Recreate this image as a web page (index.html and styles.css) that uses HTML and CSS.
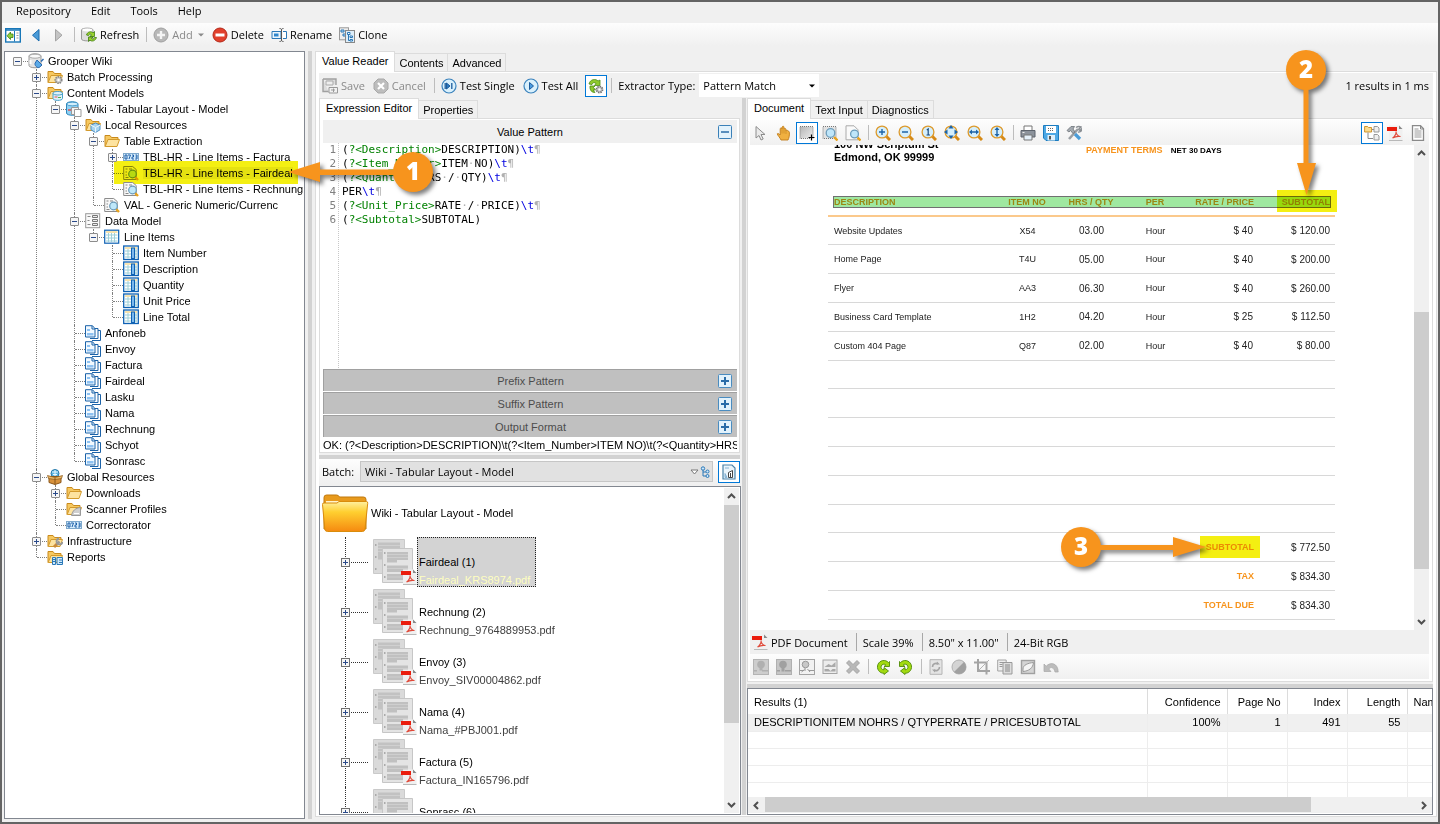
FILE: index.html
```html
<!DOCTYPE html>
<html lang="en">
<head>
    <meta charset="UTF-8">
    <meta name="viewport" content="width=device-width, initial-scale=1.0">
    <title>Grooper Wiki</title>
    <link rel="stylesheet" href="styles.css">
</head>
<body>

<svg class="sprite" width="0" height="0">
    <defs>
        <linearGradient id="gold" x1="0" y1="0" x2="0" y2="1">
            <stop offset="0" stop-color="#fff0a0"/><stop offset=".35" stop-color="#ffcf30"/><stop offset="1" stop-color="#f58a10"/>
        </linearGradient>
        <linearGradient id="steel" x1="0" y1="0" x2="1" y2="1">
            <stop offset="0" stop-color="#b4b4b4"/><stop offset="1" stop-color="#eeeeee"/>
        </linearGradient>
    </defs>
    <symbol id="i-folder" viewBox="0 0 16 16"><path d="M1 13.500V2.500h5l1.500 2H14v2" fill="#f6c860" stroke="#c98a1c"/><path d="M1.200 13.500L4 6.500h11.500L13 13.500z" fill="#fde3a0" stroke="#d39a2c"/></symbol>
    <symbol id="i-folder-gear" viewBox="0 0 16 16"><use href="#i-folder"/><circle cx="11.500" cy="11" r="3.200" fill="#ccc" stroke="#888" stroke-dasharray="1.500 .8" stroke-width="1.800"/><circle cx="11.500" cy="11" r="1.200" fill="#fff"/></symbol>
    <symbol id="i-folder-stack" viewBox="0 0 16 16"><use href="#i-folder"/><path d="M6 8c0-2 9.500-2 9.500 0v5.500c0 2.500-9.500 2.500-9.500 0z" fill="#dff2fb" stroke="#4aa0c8"/><path d="M6 8.500c0 2 9.500 2 9.500 0" fill="none" stroke="#4aa0c8"/><path d="M7.500 12h3" stroke="#e05050"/><path d="M11 12.500h3" stroke="#50b050"/></symbol>
    <symbol id="i-folder-cube" viewBox="0 0 16 16"><use href="#i-folder"/><path d="M10.500 6l4.500 2.200v4.600L10.500 15.500 6 12.800V8.200z" fill="#a8d4f0" stroke="#4a90c8"/><path d="M6 8.200l4.500 2.300L15 8.200M10.500 10.500v5" fill="none" stroke="#e8f5fc"/></symbol>
    <symbol id="i-folder-scan" viewBox="0 0 16 16"><use href="#i-folder"/><path d="M5.500 14.500c1-5 4-7.500 9-8v8z" fill="#cfcfcf" stroke="#999"/><path d="M8 12.500h5" stroke="#fff"/></symbol>
    <symbol id="i-folder-wrench" viewBox="0 0 16 16"><use href="#i-folder"/><path d="M7 14l4-4" stroke="#c98a3c" stroke-width="3"/><path d="M10.500 10.500l2-2" stroke="#999" stroke-width="2.500"/><path d="M12 5.500a3 3 0 1 0 3.500 3.500" fill="none" stroke="#999" stroke-width="1.800"/></symbol>
    <symbol id="i-folder-report" viewBox="0 0 16 16"><use href="#i-folder"/><path d="M5.500 8.500h3v7h-3zM10 8.500h5.500v7H10z" fill="#cfe8fa" stroke="#2a78b8"/><path d="M5.500 10.500h3M5.500 12.500h3M12 11h3M12 13.500h3" stroke="#2a78b8"/></symbol>
    <symbol id="i-db-plug" viewBox="0 0 16 16"><path d="M1 3c0-3 12-3 12 0v9.500c0 3-12 3-12 0z" fill="#e4e4e4" stroke="#9a9a9a"/><ellipse cx="7" cy="3.200" rx="5.800" ry="2" fill="#fafafa" stroke="#aaa"/><path d="M2.500 7v4" stroke="#fff" stroke-width="2"/><path d="M15.500 6l-2.500 2.500" stroke="#2a6ab0" stroke-width="1.500"/><path d="M9 7l5 5-2.500 2.200c-2 1.500-5.500-2-4.300-4.200z" fill="#5aaae8" stroke="#2a6ab0"/></symbol>
    <symbol id="i-model" viewBox="0 0 16 16"><path d="M.5 3C.5 0 12 0 12 3v9c0 3-11.500 3-11.500 0z" fill="#8fd0f2" stroke="#2d87bd"/><ellipse cx="6.300" cy="3" rx="5.500" ry="1.800" fill="#d2effc" stroke="#2d87bd" stroke-width=".7"/><path d="M2 9h3" stroke="#e05050" stroke-width="1.500"/><path d="M5.500 6.500h7v7h-7z" fill="#f4f4f4" stroke="#999"/><path d="M8.500 8.500h6.500v7H8.500z" fill="#fff" stroke="#999"/></symbol>
    <symbol id="i-0723" viewBox="0 0 16 16"><rect x=".5" y="4.500" width="15" height="7" fill="#d6ecfb" stroke="#7fa9cc"/><path d="M2 6h2v4H2zM5 6h2.500L6 10M9 6h1.500v2H9v2h2M12.500 6H14v4h-1.800M12.500 8H14" fill="none" stroke="#1d5fa8"/></symbol>
    <symbol id="i-reader" viewBox="0 0 16 16"><path d="M.7 1.500h9l3.500 3v10H.7z" fill="#f8f8f8" stroke="#8c8c8c"/><path d="M2.500 4h2M2.500 7h1.500M2.500 10h1.500M6 4h3M2.500 12.500h3" stroke="#888"/><path d="M12 12l3 3" stroke="#e8a21c" stroke-width="2.400"/><circle cx="9.500" cy="9" r="3.800" fill="#bfe8fa" stroke="#6a9ab8" stroke-width="1.200"/></symbol>
    <symbol id="i-datamodel" viewBox="0 0 16 16"><rect x=".7" y=".7" width="14" height="14" fill="#fafafa" stroke="#999"/><path d="M2.500 3.500h3M2.500 7.500h2M2.500 11.500h3" stroke="#888"/><path d="M7.500 2.500h5v2h-5zM7.500 6.500h5v2h-5zM7.500 10.500h5v2h-5z" fill="#eee" stroke="#777"/></symbol>
    <symbol id="i-table" viewBox="0 0 16 16"><rect x=".7" y="1.200" width="14" height="13" fill="#fff" stroke="#0f62b4" stroke-width="1.200"/><path d="M2 3h11.500" stroke="#f0c860"/><path d="M2 6h11.500M2 9h11.500M2 12h11.500M4.500 4v9M7.500 4v9M10.500 4v9" stroke="#9ed0d8"/></symbol>
    <symbol id="i-column" viewBox="0 0 16 16"><rect x=".7" y="1" width="14.600" height="13.500" fill="#fff" stroke="#0f62b4" stroke-width="1.300"/><path d="M2 3h12" stroke="#f0c860"/><path d="M2 6h12M2 9h12M2 12h12M5 4v9.500M13 4v9.500" stroke="#9ed0d8"/><rect x="8.500" y="3" width="3" height="10.500" fill="#7db8ec" stroke="#0f62b4"/></symbol>
    <symbol id="i-doctype" viewBox="0 0 16 16"><path d="M8 5.500h7.500v10H7" fill="#fff" stroke="#1b62a8"/><path d="M5 3.500h8v10H5" fill="#fff" stroke="#1b62a8"/><path d="M.5.700h7l2.500 3v8.300H.5z" fill="#f2f9ff" stroke="#1b62a8"/><path d="M7 1v3h3" fill="none" stroke="#1b62a8"/><path d="M2 4h3v2H2zM2 8h6.500v2.500H2z" fill="#8ec2f2"/></symbol>
    <symbol id="i-globalbox" viewBox="0 0 16 16"><circle cx="8" cy="4.500" r="4" fill="#5cb4e0" stroke="#2878a8"/><path d="M5 3h6M6 5.500h4M8 1v6" stroke="#e8f8ff"/><path d="M2 7.500h12v6L8 15.500 2 13.500z" fill="#d8923c" stroke="#8a5618"/><path d="M.5 6.500l7.500 2 7.500-2-1 3-6.500 1-6.500-1z" fill="#eab968" stroke="#8a5618" stroke-width=".7"/><path d="M8 9v6" stroke="#8a5618"/></symbol>

    <symbol id="i-panel" viewBox="0 0 16 16"><rect x=".7" y="1.700" width="14.600" height="13.300" fill="#fff" stroke="#1877b8" stroke-width="1.400"/><path d="M1 3h14" stroke="#1877b8" stroke-width="1.500"/><path d="M9.500 4v10.500" stroke="#1877b8"/><path d="M8 7v3.500H5.500v2L2 8.800 5.500 5v2z" fill="#8ccf3c" stroke="#3f7d10" stroke-width=".8"/><path d="M11.500 6h2M11.500 8.500h2M11.500 11h2" stroke="#999"/></symbol>
    <symbol id="i-back" viewBox="0 0 16 16"><path d="M11 2.500v11.500L4.500 8.200z" fill="#4a9bd8" stroke="#1c6cae"/></symbol>
    <symbol id="i-forward" viewBox="0 0 16 16"><path d="M4.500 2.500v11.500L11 8.200z" fill="#c4c4c4" stroke="#a4a4a4"/></symbol>
    <symbol id="i-refresh" viewBox="0 0 16 16"><path d="M.5 3C.5.500 12 .5 12 3v9c0 2.500-11.500 2.500-11.500 0z" fill="#dedede" stroke="#9a9a9a"/><ellipse cx="6.300" cy="3" rx="5" ry="1.400" fill="#fff"/><path d="M5.500 8c1-3.500 5-4 6.500-2l1.500-1.500v5H8.800L10.500 8C9 6.500 8 7 7.500 8.500z" fill="#9ad22e" stroke="#3f7d10" stroke-width=".8"/><path d="M15.500 10.500c-1 3.500-5 4.500-6.500 2.500L7.500 14.500v-4.500h4.500l-1.500 1.500c1.500 1 2.500.500 3-1z" fill="#9ad22e" stroke="#3f7d10" stroke-width=".8"/></symbol>
    <symbol id="i-add" viewBox="0 0 16 16"><circle cx="8" cy="8" r="7" fill="#b8b8b8" stroke="#a0a0a0"/><path d="M8 4v8M4 8h8" stroke="#f4f4f4" stroke-width="2.400"/></symbol>
    <symbol id="i-delete" viewBox="0 0 16 16"><circle cx="8" cy="8" r="7" fill="#e2402c" stroke="#b42818"/><path d="M3.500 8h9" stroke="#fff" stroke-width="3"/></symbol>
    <symbol id="i-rename" viewBox="0 0 16 16"><path d="M1 4.500h9v7H1z" fill="#eaf5fd" stroke="#2a78b8"/><path d="M3 6.500h4.500v3H3z" fill="#2f86cc"/><path d="M12 4.500h3.500v7H12" fill="#fff" stroke="#2a78b8"/><path d="M8.500 1.500c1 0 2 .3 2 1.200v10.600c0 .9-1 1.200-2 1.200M12.500 1.500c-1 0-2 .3-2 1.200v10.600c0 .9 1 1.200 2 1.200" fill="none" stroke="#555"/></symbol>
    <symbol id="i-clone" viewBox="0 0 16 16"><rect x=".5" y=".8" width="9" height="12" fill="#eee" stroke="#999"/><path d="M2 3h3v2H2zM4 7h3v2H4z" fill="#bfe0f8" stroke="#2a78b8"/><rect x="6.500" y="3.500" width="9" height="12" fill="#ddeefa" stroke="#888"/><path d="M8.500 5.500h2.500v2H8.500zM11 9h2.500v1.500H11zM11 12.500h2.500V14H11zM9.500 7.500v6H11" fill="#fff" stroke="#2a78b8"/></symbol>

    <symbol id="i-save-off" viewBox="0 0 16 16"><path d="M1 1h13v6M6.500 13.500H1V1" fill="#dcdcdc" stroke="#a0a0a0" stroke-width="1.400"/><path d="M4 3h7v4H4z" fill="#eee" stroke="#aaa"/><path d="M7 9.500h8.500v5.500H7z" fill="#f2f2f2" stroke="#999"/><path d="M9 12h4M11.500 10.500v3.500" stroke="#999"/></symbol>
    <symbol id="i-cancel-off" viewBox="0 0 16 16"><path d="M5 1h6l4 4v6l-4 4H5l-4-4V5z" fill="#bdbdbd" stroke="#a8a8a8"/><path d="M5 5l6 6M11 5l-6 6" stroke="#fff" stroke-width="2.200"/></symbol>
    <symbol id="i-single" viewBox="0 0 16 16"><circle cx="8" cy="8" r="7" fill="#d9f0fc" stroke="#3a82bc" stroke-width="1.200"/><path d="M5.500 5v6l3.500-3z" fill="#2a78c0" stroke="#1c5c9c"/><path d="M4.200 5v6M10.800 5v6" stroke="#1c5c9c" stroke-width="1.300"/></symbol>
    <symbol id="i-all" viewBox="0 0 16 16"><circle cx="8" cy="8" r="7" fill="#d9f0fc" stroke="#3a82bc" stroke-width="1.200"/><path d="M6.500 4.500v7l4-3.500z" fill="#4a9be0" stroke="#1c5c9c"/></symbol>
    <symbol id="i-auto" viewBox="0 0 16 16"><path d="M1 6c1-5 7-5.500 9-3l2-1v5.500H6.500L8 5.500C6.500 4 4.500 4.500 4 6.500z" fill="#8fca2e" stroke="#4c8a18" stroke-width=".8"/><path d="M2 8h5L5.500 9.500 7.500 12H5l2 2.500c-3 0-4.500-1.500-5-4.500z" fill="#8fca2e" stroke="#4c8a18" stroke-width=".8"/><circle cx="11.500" cy="11.500" r="3" fill="#ccc" stroke="#777" stroke-width="1.800" stroke-dasharray="1.500 .8"/><circle cx="11.500" cy="11.500" r="1.100" fill="#fff"/></symbol>

    <symbol id="i-pointer" viewBox="0 0 16 16"><path d="M3 1.500v11.500l3-2.500 2 4.500 2.200-1L8 9.500h4z" fill="#eaeaea" stroke="#8c8c8c"/></symbol>
    <symbol id="i-hand" viewBox="0 0 16 16"><path d="M5 15c-1-2.500-3.500-4.500-3.700-6.200.7-.9 2 .2 2.900 1.200V3.500c.8-1 1.600-.5 1.800.5V2c.8-1.200 1.800-.8 2 0v2c.8-.9 1.700-.7 1.900.2v1.500c.8-.8 2-.5 2.100.5 1 0 1.500.5 1.400 1.500C13.500 11 13 13 12 15z" fill="#f0b040" stroke="#c07c18" stroke-width=".9"/><path d="M6 4v4.500M8 4v4.500M10 5v4" stroke="#c98a24" stroke-width=".7"/></symbol>
    <symbol id="i-select" viewBox="0 0 16 16"><rect x="1" y="1.500" width="13" height="12" fill="url(#steel)" stroke="#777" stroke-dasharray="1 1"/><path d="M12.500 9.500v6M9.500 12.500h6" stroke="#000" stroke-width="1.200"/></symbol>
    <symbol id="i-select-zoom" viewBox="0 0 16 16"><rect x="1" y="1.500" width="13" height="12" fill="#e2e2e2" stroke="#777" stroke-dasharray="1 1"/><path d="M12 12l3.500 3.500" stroke="#e8a21c" stroke-width="2.400"/><circle cx="8.500" cy="8" r="4.300" fill="#bfe6fa" stroke="#6d9dbb" stroke-width="1.300"/></symbol>
    <symbol id="i-page-zoom" viewBox="0 0 16 16"><path d="M1 .8h8l4 4v10H1z" fill="#fafafa" stroke="#aaa"/><path d="M12.500 12.500l3 3" stroke="#e8a21c" stroke-width="2.400"/><circle cx="9.500" cy="9" r="3.900" fill="#bfe6fa" stroke="#6d9dbb" stroke-width="1.300"/></symbol>
    <symbol id="i-lens" viewBox="0 0 16 16"><path d="M11 11l4 4" stroke="#d68a16" stroke-width="3"/><circle cx="7" cy="7" r="5.900" fill="#d5effc" stroke="#dd9a2c" stroke-width="1.300"/></symbol>
    <symbol id="i-zoom-in" viewBox="0 0 16 16"><use href="#i-lens"/><path d="M4 7h6M7 4v6" stroke="#1c64a8" stroke-width="1.400"/></symbol>
    <symbol id="i-zoom-out" viewBox="0 0 16 16"><use href="#i-lens"/><path d="M4 7h6" stroke="#1c64a8" stroke-width="1.500"/></symbol>
    <symbol id="i-zoom-one" viewBox="0 0 16 16"><use href="#i-lens"/><path d="M5.800 5L7.200 4v6M5.500 10h3.500" fill="none" stroke="#1c4c80" stroke-width="1.200"/></symbol>
    <symbol id="i-zoom-fit" viewBox="0 0 16 16"><use href="#i-lens"/><path d="M7 0l2.500 3.500h-5zM7 14l2.500-3.500h-5zM0 7l3.500-2.500v5zM14 7l-3.500-2.500v5z" fill="#1c64a8"/></symbol>
    <symbol id="i-zoom-wide" viewBox="0 0 16 16"><use href="#i-lens"/><path d="M2 7l3-2.500v5zM12 7L9 4.500v5zM5 6.300h4v1.400H5z" fill="#1c64a8"/></symbol>
    <symbol id="i-zoom-tall" viewBox="0 0 16 16"><use href="#i-lens"/><path d="M7 2l2.500 3h-5zM7 12l2.500-3h-5zM6.300 5h1.400v4H6.300z" fill="#1c64a8"/></symbol>
    <symbol id="i-print" viewBox="0 0 16 16"><path d="M4 1h8v5H4z" fill="#fff" stroke="#777"/><path d="M1 5.500h14v6.500H1z" fill="#8c939c" stroke="#5c636c"/><path d="M4 10h8v5H4z" fill="#e4f0fa" stroke="#777"/><path d="M2.500 7.500h2" stroke="#eee"/></symbol>
    <symbol id="i-disk" viewBox="0 0 16 16"><path d="M.5.500h15v15H3l-2.500-2.500z" fill="#4ea8e4" stroke="#1c7cc0"/><path d="M3 1h10v7H3z" fill="#fff"/><path d="M5 3.500h6M5 5.500h6" stroke="#666" stroke-dasharray="1 1" stroke-width="1"/><path d="M4.500 10h7.500v5.500H4.500z" fill="#dff0fb"/><path d="M6 11h2v3.500H6z" fill="#555"/></symbol>
    <symbol id="i-tools" viewBox="0 0 16 16"><path d="M3 14L12 4" stroke="#9a9fa4" stroke-width="2.600"/><path d="M10 2.500c2-1.500 4-1 5-.5l-2.300 2.300 1.200 1.200L16 3.500c.2 2-2 4-4 3.500" fill="none" stroke="#8a8f94" stroke-width="1.400"/><path d="M9 9l5 5" stroke="#4a9cd8" stroke-width="3.200"/><path d="M1 5.500L5 1.500h3.500L7 4l2 3-2 1.500L4.500 5.500 3 7z" fill="#a4aab0" stroke="#6c7278" stroke-width=".8"/></symbol>
    <symbol id="i-folder-tree" viewBox="0 0 16 16"><path d="M.6 7V1.500h3l1 1h3V7z" fill="#fbdc90" stroke="#c98a1c" stroke-width=".9"/><path d="M4 7.500v6h5M8 4.500h2" fill="none" stroke="#888"/><path d="M10 1.500h3.500l1.500 1.500v4h-5zM10 9.500h3.500l1.500 1.500v4h-5z" fill="#eee" stroke="#999"/></symbol>
    <symbol id="i-pdf" viewBox="0 0 16 16"><path d="M2 .5h10l3.500 3.500v11.500H2z" fill="#f0f0f0"/><path d="M12 .5L15.500 4H12z" fill="#888"/><path d="M2 15.500h13.500" stroke="#b8b8b8"/><path d="M0 2h10v4H0z" fill="#ea1c0c"/><path d="M5.500 13c2-1 4-4.500 3.500-6.500 0 3 2.500 5 4.500 5-3-.5-5.500 0-8 1.500z" fill="none" stroke="#e04838" stroke-width="1.100"/></symbol>
    <symbol id="i-text" viewBox="0 0 16 16"><path d="M2.500.700h8l3 3v11.600h-11z" fill="#fff" stroke="#8a8a8a" stroke-width="1.300"/><path d="M10.500 1v3h3" fill="none" stroke="#8a8a8a"/><path d="M4.500 4h4M4.500 6h7M4.500 8h7M4.500 10h7M4.500 12h7" stroke="#999"/></symbol>

    <symbol id="i-stamp" viewBox="0 0 16 16"><rect x=".5" y=".5" width="15" height="15" fill="#cdcdcd" stroke="#b4b4b4"/><circle cx="8" cy="5.500" r="3.800" fill="#b0b0b0"/><path d="M6.500 8h3v3.500h-3zM1 11h3v1.500H1zM9 11h6v1.500H9z" fill="#b0b0b0"/></symbol>
    <symbol id="i-stamp-dark" viewBox="0 0 16 16"><rect x=".5" y=".5" width="15" height="15" fill="#c6c6c6" stroke="#b0b0b0"/><circle cx="7" cy="5.500" r="3.800" fill="#a0a0a0"/><path d="M5.500 8h3v4.500h-3zM1 11h3v1.500H1zM9 11h6v1.500H9z" fill="#a0a0a0"/></symbol>
    <symbol id="i-stamp-line" viewBox="0 0 16 16"><rect x=".5" y=".5" width="15" height="15" fill="#f2f2f2" stroke="#a4a4a4"/><circle cx="6.500" cy="5.500" r="3.300" fill="#c8c8c8" stroke="#999"/><path d="M6 9v3M2.500 13l3-2.500M8.500 10l2.500 3M1 11.500h4M10 11.500h5" stroke="#999"/></symbol>
    <symbol id="i-picture" viewBox="0 0 16 16"><rect x="1" y="1" width="14" height="13.500" fill="#ececec" stroke="#a4a4a4"/><path d="M2.500 8l4-3 3 1.500L13.500 3v5z" fill="#aaa"/><path d="M2.500 10h4l2 2 2-2h3v2.500h-11z" fill="#a8a8a8"/></symbol>
    <symbol id="i-cross" viewBox="0 0 16 16"><path d="M4 1.500l4 4 4-4L14.500 4l-4 4 4 4-2.500 2.500-4-4-4 4L1.500 12l4-4-4-4z" fill="#b8b8b8" stroke="#999" stroke-width=".8"/></symbol>
    <symbol id="i-rot-left" viewBox="0 0 16 16"><path d="M13.500 3.500A6.400 6.400 0 1 0 9 14.300v1.200l4.500-3.500L9 8.500v2.300A2.800 2.800 0 1 1 10.800 6L9 7.500h5.500V2.500z" fill="#a2da10" stroke="#4f8a08" stroke-width=".9"/></symbol>
    <symbol id="i-rot-right" viewBox="0 0 16 16"><path d="M2.500 3.500A6.400 6.400 0 1 1 7 14.300v1.200L2.500 12 7 8.500v2.300A2.800 2.800 0 1 0 5.200 6L7 7.500H1.500V2.500z" fill="#a2da10" stroke="#4f8a08" stroke-width=".9"/></symbol>
    <symbol id="i-page-refresh" viewBox="0 0 16 16"><path d="M2 .7h12v14.600H2z" fill="#e4e4e4" stroke="#b4b4b4"/><path d="M4.500 8A3.500 3.500 0 0 1 10 5M11.500 8A3.500 3.500 0 0 1 6 11" fill="none" stroke="#a4a4a4" stroke-width="1.600"/><path d="M9 2.500l3 3H8.500zM7 13.500l-3-3h3.500z" fill="#a4a4a4"/></symbol>
    <symbol id="i-contrast" viewBox="0 0 16 16"><circle cx="8" cy="8" r="7" fill="#d4d4d4" stroke="#b0b0b0"/><path d="M13 3A7 7 0 0 1 3 13z" fill="#a0a0a0"/></symbol>
    <symbol id="i-crop" viewBox="0 0 16 16"><path d="M4 0v12h12M0 3.500h12.500V15.500" fill="none" stroke="#a4a4a4" stroke-width="2"/><path d="M5 11L15 1" stroke="#b4b4b4"/></symbol>
    <symbol id="i-pages" viewBox="0 0 16 16"><path d="M.7 1h8.500v11H.7z" fill="#eee" stroke="#a4a4a4"/><path d="M2.500 3.500h4M2.500 5.500h3M2.500 7.500h3" stroke="#999"/><path d="M6 3.500h9v11.500H6z" fill="#ddd" stroke="#999"/><path d="M8 6h5M8 8h5M8 10h5M8 12h5" stroke="#888"/></symbol>
    <symbol id="i-swirl" viewBox="0 0 16 16"><rect x="1.500" y="1.500" width="13" height="13" fill="#d4d4d4" stroke="#a0a0a0" stroke-width="1.400"/><path d="M3 10c0-4 5-6 10.500-6.500C13 9 9 12 3 12.500z" fill="#f4f4f4" stroke="#999"/></symbol>
    <symbol id="i-undo" viewBox="0 0 16 16"><path d="M1 5v7.500h7L5.800 10c2-2.500 5-1.800 6.200 3h3.200C15 4 7.500 2.500 3.200 7.200z" fill="#bcbcbc" stroke="#a8a8a8" stroke-width=".7"/></symbol>
    <symbol id="i-tree-small" viewBox="0 0 10 12"><path d="M3 4v6h3M3 6h3" fill="none" stroke="#2a78b8"/><circle cx="3" cy="2.500" r="1.700" fill="#cfe8fa" stroke="#2a78b8"/><circle cx="7.500" cy="5.500" r="1.500" fill="#cfe8fa" stroke="#2a78b8"/><circle cx="7.500" cy="10" r="1.500" fill="#cfe8fa" stroke="#2a78b8"/></symbol>
    <symbol id="i-test-page" viewBox="0 0 16 16"><path d="M2 1h9l3 3v11H2z" fill="#eaf4fb" stroke="#4a82a8" stroke-width="1.200"/><path d="M4 9.500l2 4h-2zM4 4h4" fill="#9cc4e0" stroke="#88b4d4"/><path d="M7.500 13.500V8.500l4-2v7z" fill="#fff" stroke="#444"/><path d="M9.500 9v4.500" stroke="#444"/></symbol>
    <symbol id="i-caret" viewBox="0 0 8 8"><path d="M1 2.500h6L4 5.500z"/></symbol>
    <symbol id="i-up" viewBox="0 0 9 9"><path d="M1 6l3.500-3.500L8 6" fill="none" stroke="#505050" stroke-width="2"/></symbol>
    <symbol id="i-down" viewBox="0 0 9 9"><path d="M1 3l3.500 3.500L8 3" fill="none" stroke="#505050" stroke-width="2"/></symbol>
    <symbol id="i-left" viewBox="0 0 9 9"><path d="M6 1L2.500 4.500 6 8" fill="none" stroke="#505050" stroke-width="2"/></symbol>
    <symbol id="i-right" viewBox="0 0 9 9"><path d="M3 1l3.500 3.500L3 8" fill="none" stroke="#505050" stroke-width="2"/></symbol>
    <symbol id="i-plus" viewBox="0 0 14 14"><rect x=".5" y=".5" width="13" height="13" rx="1" fill="#e2f2fc" stroke="#4a8cc0"/><path d="M3 7h8M7 3v8" stroke="#2a6ca8" stroke-width="2"/></symbol>
    <symbol id="i-minus" viewBox="0 0 14 14"><rect x=".5" y=".5" width="13" height="13" rx="1" fill="#e2f2fc" stroke="#3a80b8"/><path d="M3 7h8" stroke="#2a6ca8" stroke-width="1.500"/></symbol>
    <symbol id="i-bigfolder" viewBox="0 0 48 40"><path d="M3 36V4.500Q3 2 5.500 2h10Q17.500 2 18.500 4h24Q45 4 45 6.500V36z" fill="#e89a1c" stroke="#c0780c"/><path d="M5 8h38v6H5z" fill="#fff3cc"/><path d="M1.500 11.500q-.3-1.500 1.500-1.500h13l2-1.500h27.500q1.500 0 1.200 2L44 36q-.3 2.500-2.500 2.500h-35Q4 38.500 3.800 36z" fill="url(#gold)" stroke="#d98c0c"/></symbol>
    <symbol id="i-docs" viewBox="0 0 44 46"><path d="M.5.500h31v34H.5z" fill="#dadada" stroke="#cacaca"/><path d="M5 3.500h22v17H5z" fill="#c2c2c2"/><path d="M5 6.500h22M5 9.500h22M5 12.500h22" stroke="#d0d0d0"/><path d="M9.500 9.500h30v34h-30z" fill="#e4e4e4" stroke="#c6c6c6"/><path d="M14 13h21v8H14zM14 21h10v2.500H14zM14 26.500h21v6.500H14zM14 35h21v6H14z" fill="#c0c0c0"/><path d="M14 15.500h21M14 18.500h21M14 29.500h21M14 38h21" stroke="#cecece"/><path d="M11 14h1.500M11 26h1.500M11 38h1.500M2 6h1.500M2 18h1.500M2 30h1.500" stroke="#aaa" stroke-width="2"/></symbol>
</svg>

<nav class="menu">
    <button>Repository</button>
    <button>Edit</button>
    <button>Tools</button>
    <button>Help</button>
</nav>

<div class="toolbar main-toolbar">
    <button aria-label="Toggle panel"><svg><use href="#i-panel"/></svg></button>
    <button aria-label="Back"><svg><use href="#i-back"/></svg></button>
    <button aria-label="Forward"><svg><use href="#i-forward"/></svg></button>
    <span class="sep"></span>
    <button><svg><use href="#i-refresh"/></svg>Refresh</button>
    <span class="sep"></span>
    <button class="off"><svg><use href="#i-add"/></svg>Add<svg class="caret"><use href="#i-caret"/></svg></button>
    <button><svg><use href="#i-delete"/></svg>Delete</button>
    <button><svg><use href="#i-rename"/></svg>Rename</button>
    <button><svg><use href="#i-clone"/></svg>Clone</button>
</div>

<main>
    <aside class="tree">
        <ul>
            <li><div class="row"><button class="toggle open"></button><svg><use href="#i-db-plug"/></svg>Grooper Wiki</div>
                <ul>
                    <li><div class="row"><button class="toggle"></button><svg><use href="#i-folder-gear"/></svg>Batch Processing</div></li>
                    <li><div class="row"><button class="toggle open"></button><svg><use href="#i-folder-stack"/></svg>Content Models</div>
                        <ul>
                            <li><div class="row"><button class="toggle open"></button><svg><use href="#i-model"/></svg>Wiki - Tabular Layout - Model</div>
                                <ul>
                                    <li><div class="row"><button class="toggle open"></button><svg><use href="#i-folder-cube"/></svg>Local Resources</div>
                                        <ul>
                                            <li><div class="row"><button class="toggle open"></button><svg><use href="#i-folder"/></svg>Table Extraction</div>
                                                <ul>
                                                    <li><div class="row"><button class="toggle"></button><svg><use href="#i-0723"/></svg>TBL-HR - Line Items - Factura</div></li>
                                                    <li><div class="row"><svg><use href="#i-reader"/></svg><span class="current">TBL-HR - Line Items - Fairdeal</span><span class="mark mark-tree"></span></div></li>
                                                    <li><div class="row"><svg><use href="#i-reader"/></svg>TBL-HR - Line Items - Rechnung</div></li>
                                                </ul>
                                            </li>
                                            <li><div class="row"><svg><use href="#i-reader"/></svg>VAL - Generic Numeric/Currenc</div></li>
                                        </ul>
                                    </li>
                                    <li><div class="row"><button class="toggle open"></button><svg><use href="#i-datamodel"/></svg>Data Model</div>
                                        <ul>
                                            <li><div class="row"><button class="toggle open"></button><svg><use href="#i-table"/></svg>Line Items</div>
                                                <ul>
                                                    <li><div class="row"><svg><use href="#i-column"/></svg>Item Number</div></li>
                                                    <li><div class="row"><svg><use href="#i-column"/></svg>Description</div></li>
                                                    <li><div class="row"><svg><use href="#i-column"/></svg>Quantity</div></li>
                                                    <li><div class="row"><svg><use href="#i-column"/></svg>Unit Price</div></li>
                                                    <li><div class="row"><svg><use href="#i-column"/></svg>Line Total</div></li>
                                                </ul>
                                            </li>
                                        </ul>
                                    </li>
                                    <li><div class="row"><svg><use href="#i-doctype"/></svg>Anfoneb</div></li>
                                    <li><div class="row"><svg><use href="#i-doctype"/></svg>Envoy</div></li>
                                    <li><div class="row"><svg><use href="#i-doctype"/></svg>Factura</div></li>
                                    <li><div class="row"><svg><use href="#i-doctype"/></svg>Fairdeal</div></li>
                                    <li><div class="row"><svg><use href="#i-doctype"/></svg>Lasku</div></li>
                                    <li><div class="row"><svg><use href="#i-doctype"/></svg>Nama</div></li>
                                    <li><div class="row"><svg><use href="#i-doctype"/></svg>Rechnung</div></li>
                                    <li><div class="row"><svg><use href="#i-doctype"/></svg>Schyot</div></li>
                                    <li><div class="row"><svg><use href="#i-doctype"/></svg>Sonrasc</div></li>
                                </ul>
                            </li>
                        </ul>
                    </li>
                    <li><div class="row"><button class="toggle open"></button><svg><use href="#i-globalbox"/></svg>Global Resources</div>
                        <ul>
                            <li><div class="row"><button class="toggle"></button><svg><use href="#i-folder"/></svg>Downloads</div></li>
                            <li><div class="row"><svg><use href="#i-folder-scan"/></svg>Scanner Profiles</div></li>
                            <li><div class="row"><svg><use href="#i-0723"/></svg>Correctorator</div></li>
                        </ul>
                    </li>
                    <li><div class="row"><button class="toggle"></button><svg><use href="#i-folder-wrench"/></svg>Infrastructure</div></li>
                    <li><div class="row"><svg><use href="#i-folder-report"/></svg>Reports</div></li>
                </ul>
            </li>
        </ul>
    </aside>

    <div class="splitter-v"></div>

    <section class="tabs workspace">
        <div class="tab-strip">
            <button class="active">Value Reader</button>
            <button>Contents</button>
            <button>Advanced</button>
        </div>
        <div class="tab-page">
            <div class="toolbar flat">
                <button class="off"><svg><use href="#i-save-off"/></svg>Save</button>
                <button class="off"><svg><use href="#i-cancel-off"/></svg>Cancel</button>
                <span class="sep"></span>
                <button><svg><use href="#i-single"/></svg>Test Single</button>
                <button><svg><use href="#i-all"/></svg>Test All</button>
                <button class="pressed" aria-label="Auto test"><svg><use href="#i-auto"/></svg></button>
                <span class="sep"></span>
                <label for="extractor">Extractor Type:</label>
                <div class="combo">
                    <select id="extractor"><option>Pattern Match</option></select>
                    <svg class="caret"><use href="#i-caret"/></svg>
                </div>
                <span class="timing">1 results in 1 ms</span>
            </div>

            <div class="panes">
                <div class="left-pane">
                    <section class="tabs editor">
                        <div class="tab-strip">
                            <button class="active">Expression Editor</button>
                            <button>Properties</button>
                        </div>
                        <div class="tab-page">
                            <div class="bar bar-open">Value Pattern<button aria-label="Collapse"><svg><use href="#i-minus"/></svg></button></div>
                            <ol class="code">
                                <li>(<b>?&lt;Description&gt;</b>DESCRIPTION)<i>\t</i><u>¶</u></li>
                                <li>(<b>?&lt;Item_Number&gt;</b>ITEM<u>·</u>NO)<i>\t</i><u>¶</u></li>
                                <li>(<b>?&lt;Quantity&gt;</b>HRS<u>·</u>/<u>·</u>QTY)<i>\t</i><u>¶</u></li>
                                <li>PER<i>\t</i><u>¶</u></li>
                                <li>(<b>?&lt;Unit_Price&gt;</b>RATE<u>·</u>/<u>·</u>PRICE)<i>\t</i><u>¶</u></li>
                                <li>(<b>?&lt;Subtotal&gt;</b>SUBTOTAL)</li>
                            </ol>
                            <div class="bar">Prefix Pattern<button aria-label="Expand"><svg><use href="#i-plus"/></svg></button></div>
                            <div class="bar">Suffix Pattern<button aria-label="Expand"><svg><use href="#i-plus"/></svg></button></div>
                            <div class="bar">Output Format<button aria-label="Expand"><svg><use href="#i-plus"/></svg></button></div>
                            <div class="result-line">OK: (?&lt;Description&gt;DESCRIPTION)\t(?&lt;Item_Number&gt;ITEM NO)\t(?&lt;Quantity&gt;HRS / QTY)</div>
                        </div>
                    </section>

                    <div class="splitter-h"></div>

                    <section class="batch">
                        <div class="toolbar batch-bar">
                            <label for="batch">Batch:</label>
                            <div class="combo combo-gray">
                                <select id="batch"><option>Wiki - Tabular Layout - Model</option></select>
                                <svg class="pick" viewBox="0 0 9 6"><path d="M1 1h7L4.500 5z" fill="#fff" stroke="#777"/></svg>
                                <svg class="pick-tree"><use href="#i-tree-small"/></svg>
                            </div>
                            <button class="pressed" aria-label="Test page"><svg><use href="#i-test-page"/></svg></button>
                        </div>
                        <div class="batch-box">
                            <div class="batch-list">
                                <div class="batch-root"><svg><use href="#i-bigfolder"/></svg>Wiki - Tabular Layout - Model</div>
                                <ul>
                                    <li><button class="toggle"></button><span class="thumb"><svg><use href="#i-docs"/></svg><svg class="badge"><use href="#i-pdf"/></svg></span><span class="name selected">Fairdeal (1)<small>Fairdeal_KRS8974.pdf</small></span></li>
                                    <li><button class="toggle"></button><span class="thumb"><svg><use href="#i-docs"/></svg><svg class="badge"><use href="#i-pdf"/></svg></span><span class="name">Rechnung (2)<small>Rechnung_9764889953.pdf</small></span></li>
                                    <li><button class="toggle"></button><span class="thumb"><svg><use href="#i-docs"/></svg><svg class="badge"><use href="#i-pdf"/></svg></span><span class="name">Envoy (3)<small>Envoy_SIV00004862.pdf</small></span></li>
                                    <li><button class="toggle"></button><span class="thumb"><svg><use href="#i-docs"/></svg><svg class="badge"><use href="#i-pdf"/></svg></span><span class="name">Nama (4)<small>Nama_#PBJ001.pdf</small></span></li>
                                    <li><button class="toggle"></button><span class="thumb"><svg><use href="#i-docs"/></svg><svg class="badge"><use href="#i-pdf"/></svg></span><span class="name">Factura (5)<small>Factura_IN165796.pdf</small></span></li>
                                    <li><button class="toggle"></button><span class="thumb"><svg><use href="#i-docs"/></svg></span><span class="name">Sonrasc (6)</span></li>
                                </ul>
                            </div>
                            <div class="scroll-v">
                                <svg><use href="#i-up"/></svg>
                                <div class="track"><div class="thumb-v batch-thumb"></div></div>
                                <svg><use href="#i-down"/></svg>
                            </div>
                        </div>
                    </section>
                </div>

                <div class="splitter-v inner"></div>

                <div class="right-pane">
                    <section class="tabs viewer">
                        <div class="tab-strip">
                            <button class="active">Document</button>
                            <button>Text Input</button>
                            <button>Diagnostics</button>
                        </div>
                        <div class="tab-page">
                            <div class="toolbar">
                                <button aria-label="Pointer"><svg><use href="#i-pointer"/></svg></button>
                                <button aria-label="Pan"><svg><use href="#i-hand"/></svg></button>
                                <button class="pressed" aria-label="Select"><svg><use href="#i-select"/></svg></button>
                                <button aria-label="Zoom to selection"><svg><use href="#i-select-zoom"/></svg></button>
                                <button aria-label="Zoom page"><svg><use href="#i-page-zoom"/></svg></button>
                                <span class="sep"></span>
                                <button aria-label="Zoom in"><svg><use href="#i-zoom-in"/></svg></button>
                                <button aria-label="Zoom out"><svg><use href="#i-zoom-out"/></svg></button>
                                <button aria-label="Actual size"><svg><use href="#i-zoom-one"/></svg></button>
                                <button aria-label="Fit page"><svg><use href="#i-zoom-fit"/></svg></button>
                                <button aria-label="Fit width"><svg><use href="#i-zoom-wide"/></svg></button>
                                <button aria-label="Fit height"><svg><use href="#i-zoom-tall"/></svg></button>
                                <span class="sep"></span>
                                <button aria-label="Print"><svg><use href="#i-print"/></svg></button>
                                <button aria-label="Save"><svg><use href="#i-disk"/></svg></button>
                                <button aria-label="Tools"><svg><use href="#i-tools"/></svg></button>
                                <span class="spacer"></span>
                                <button class="pressed" aria-label="Folder view"><svg><use href="#i-folder-tree"/></svg></button>
                                <button aria-label="PDF view"><svg><use href="#i-pdf"/></svg></button>
                                <button aria-label="Text view"><svg><use href="#i-text"/></svg></button>
                            </div>

                            <div class="canvas">
                                <div class="paper">
                                    <div class="letterhead">
                                        <p class="address">100 NW Scriptum St<br>Edmond, OK 99999</p>
                                        <p class="terms"><span>PAYMENT TERMS</span> NET 30 DAYS</p>
                                    </div>
                                    <table class="invoice">
                                        <thead>
                                            <tr>
                                                <th class="c-desc">DESCRIPTION</th>
                                                <th class="c-mid">ITEM NO</th>
                                                <th class="c-mid">HRS / QTY</th>
                                                <th class="c-mid">PER</th>
                                                <th class="c-rate">RATE / PRICE</th>
                                                <th class="c-sub">SUBTOTAL<span class="match"></span><span class="mark mark-head"></span></th>
                                            </tr>
                                        </thead>
                                        <tbody>
                                            <tr><td>Website Updates</td><td>X54</td><td>03.00</td><td>Hour</td><td>$ 40</td><td>$ 120.00</td></tr>
                                            <tr><td>Home Page</td><td>T4U</td><td>05.00</td><td>Hour</td><td>$ 40</td><td>$ 200.00</td></tr>
                                            <tr><td>Flyer</td><td>AA3</td><td>06.30</td><td>Hour</td><td>$ 40</td><td>$ 260.00</td></tr>
                                            <tr><td>Business Card Template</td><td>1H2</td><td>04.20</td><td>Hour</td><td>$ 25</td><td>$ 112.50</td></tr>
                                            <tr><td>Custom 404 Page</td><td>Q87</td><td>02.00</td><td>Hour</td><td>$ 40</td><td>$ 80.00</td></tr>
                                            <tr><td colspan="6"></td></tr>
                                            <tr><td colspan="6"></td></tr>
                                            <tr><td colspan="6"></td></tr>
                                            <tr><td colspan="6"></td></tr>
                                            <tr><td colspan="6"></td></tr>
                                            <tr><td colspan="6"></td></tr>
                                            <tr><th colspan="5"><span class="total">SUBTOTAL<span class="mark mark-total"></span></span></th><td>$ 772.50</td></tr>
                                            <tr><th colspan="5">TAX</th><td>$ 834.30</td></tr>
                                            <tr><th colspan="5">TOTAL DUE</th><td>$ 834.30</td></tr>
                                        </tbody>
                                    </table>
                                </div>
                                <div class="scroll-v">
                                    <svg><use href="#i-up"/></svg>
                                    <div class="track"><div class="thumb-v doc-thumb"></div></div>
                                    <svg><use href="#i-down"/></svg>
                                </div>
                            </div>

                            <div class="status">
                                <span><svg><use href="#i-pdf"/></svg>PDF Document</span>
                                <span>Scale 39%</span>
                                <span>8.50" x 11.00"</span>
                                <span>24-Bit RGB</span>
                            </div>

                            <div class="toolbar">
                                <button aria-label="Stamp"><svg><use href="#i-stamp"/></svg></button>
                                <button aria-label="Dark stamp"><svg><use href="#i-stamp-dark"/></svg></button>
                                <button aria-label="Outline stamp"><svg><use href="#i-stamp-line"/></svg></button>
                                <button aria-label="Picture"><svg><use href="#i-picture"/></svg></button>
                                <button aria-label="Remove"><svg><use href="#i-cross"/></svg></button>
                                <span class="sep"></span>
                                <button aria-label="Rotate left"><svg><use href="#i-rot-left"/></svg></button>
                                <button aria-label="Rotate right"><svg><use href="#i-rot-right"/></svg></button>
                                <span class="sep"></span>
                                <button aria-label="Reload page"><svg><use href="#i-page-refresh"/></svg></button>
                                <button aria-label="Contrast"><svg><use href="#i-contrast"/></svg></button>
                                <button aria-label="Crop"><svg><use href="#i-crop"/></svg></button>
                                <button aria-label="Pages"><svg><use href="#i-pages"/></svg></button>
                                <button aria-label="Deskew"><svg><use href="#i-swirl"/></svg></button>
                                <button aria-label="Undo"><svg><use href="#i-undo"/></svg></button>
                            </div>
                        </div>
                    </section>

                    <div class="splitter-h"></div>

                    <section class="results">
                        <div class="results-view">
                            <table>
                                <thead>
                                    <tr><th>Results (1)</th><th class="w80">Confidence</th><th class="w60">Page No</th><th class="w60">Index</th><th class="w60">Length</th><th class="w-name">Name</th></tr>
                                </thead>
                                <tbody>
                                    <tr class="hit"><td>DESCRIPTIONITEM NOHRS / QTYPERRATE / PRICESUBTOTAL</td><td>100%</td><td>1</td><td>491</td><td>55</td><td></td></tr>
                                    <tr><td></td><td></td><td></td><td></td><td></td><td></td></tr>
                                    <tr><td></td><td></td><td></td><td></td><td></td><td></td></tr>
                                    <tr><td></td><td></td><td></td><td></td><td></td><td></td></tr>
                                    <tr><td></td><td></td><td></td><td></td><td></td><td></td></tr>
                                </tbody>
                            </table>
                        </div>
                        <div class="scroll-h">
                            <svg><use href="#i-left"/></svg>
                            <div class="track"><div class="thumb-h"></div></div>
                            <svg><use href="#i-right"/></svg>
                        </div>
                    </section>
                </div>
            </div>
        </div>
    </section>
</main>

<!-- numbered callouts drawn over the window -->
<div class="callout one">
    <svg viewBox="0 0 150 48"><path d="M4 20l32-10v7.500h80v5.500H36v7z"/><circle cx="129" cy="20" r="20"/></svg>
    <span>1</span>
</div>
<div class="callout two">
    <svg viewBox="0 0 48 152"><path d="M17.500 30h5v83H30l-9.500 32L11 113h6.500z"/><circle cx="20" cy="20" r="20"/></svg>
    <span>2</span>
</div>
<div class="callout three">
    <svg viewBox="0 0 152 48"><path d="M30 18h82v-8l33 10-33 10v-7H30z"/><circle cx="20" cy="20" r="20"/></svg>
    <span>3</span>
</div>

</body>
</html>
```
FILE: styles.css
```css
* {
    box-sizing: border-box;
}
body {
    margin: 0;
    height: 100vh;
    min-height: 600px;
    display: flex;
    flex-direction: column;
    position: relative;
    overflow: hidden;
    border: 2px solid #646464;
    background-color: #f0f0f0;
    font-family: "Liberation Sans", Arial, sans-serif;
    font-size: 11px;
    color: #000;
}
button, select {
    font: inherit;
    color: inherit;
    background: none;
    border: none;
    padding: 0;
    margin: 0;
}
ul, ol, p {
    margin: 0;
    padding: 0;
    list-style: none;
}
svg {
    display: block;
    flex: none;
    width: 16px;
    height: 16px;
}
.sprite {
    position: absolute;
    width: 0;
    height: 0;
}

/* menu and toolbars */
.menu, .toolbar, .status {
    display: flex;
    align-items: center;
    flex: none;
    font-family: "Open Sans", "Noto Sans", sans-serif;
    font-size: 11px;
    white-space: nowrap;
}
.menu {
    height: 21px;
    padding: 0 4px;
}
.menu button {
    padding: 0 10px 4px;
}
.toolbar {
    height: 25px;
    gap: 1px;
    background: linear-gradient(#fdfdfd, #f0f0f0);
}
.main-toolbar {
    height: 23px;
    margin-bottom: 1px;
}
.toolbar.flat {
    background: #f0f0f0;
}
.toolbar button {
    display: flex;
    align-items: center;
    gap: 3px;
    height: 22px;
    padding: 0 2px;
    border: 1px solid transparent;
}
.toolbar.flat button {
    padding-right: 3px;
}
.toolbar button.off {
    color: #8a8a8a;
}
.toolbar button.pressed {
    padding-right: 2px;
    border-color: #0078d7;
    background-color: #fff;
}
.flat button.pressed {
    margin-left: 2px;
}
.sep {
    width: 1px;
    height: 15px;
    margin: 0 2px 0 3px;
    background-color: #bdbdbd;
}
.spacer {
    flex: 1;
}
.toolbar svg.caret {
    width: 8px;
    height: 8px;
    margin-left: 1px;
    fill: currentColor;
}
.combo {
    display: flex;
    align-items: center;
    width: 120px;
    height: 23px;
    margin-left: 3px;
    padding-right: 3px;
    background-color: #fff;
}
.combo select {
    appearance: none;
    flex: 1;
    min-width: 0;
    height: 100%;
    padding: 0 4px;
}
.toolbar label {
    padding: 0 0 0 3px;
}
.timing {
    margin-left: auto;
    padding-right: 4px;
}

main {
    flex: 1;
    min-height: 0;
    display: flex;
    padding: 4px 1px 3px 2px;
}
.splitter-v {
    flex: none;
    width: 4px;
    margin: 0 3px;
    background-color: #d2d2d2;
}
.splitter-v.inner {
    margin: 0 1px 0 2px;
}
.splitter-h {
    flex: none;
    height: 4px;
    margin: 2px 0 0;
    background-color: #d2d2d2;
}

/* repository tree */
.tree {
    flex: none;
    width: 301px;
    padding: 1px 0 0 8px;
    overflow: hidden;
    border: 1px solid #828790;
    background-color: #fff;
    white-space: nowrap;
}
.tree ul ul {
    margin-left: 19px;
}
.tree li {
    position: relative;
}
.tree ul ul > li::before {
    content: "";
    position: absolute;
    left: 4px;
    top: 0;
    bottom: 0;
    border-left: 1px dotted #808080;
}
.tree ul ul > li:last-child::before {
    bottom: auto;
    height: 8px;
}
.row {
    position: relative;
    display: flex;
    align-items: center;
    gap: 4px;
    height: 16px;
    padding-left: 15px;
}
.row::before {
    content: "";
    position: absolute;
    left: 5px;
    width: 10px;
    top: 8px;
    border-top: 1px dotted #808080;
}
.toggle {
    position: absolute;
    z-index: 1;
    width: 9px;
    height: 9px;
    border: 1px solid #8c8c8c;
    border-radius: 1px;
    background:
        linear-gradient(#2a4a8a, #2a4a8a) center / 5px 1px no-repeat,
        linear-gradient(#2a4a8a, #2a4a8a) center / 1px 5px no-repeat,
        #f6f6f6;
}
.toggle.open {
    background:
        linear-gradient(#2a4a8a, #2a4a8a) center / 5px 1px no-repeat,
        #f6f6f6;
}
.row .toggle {
    left: 0;
    top: 4px;
}
.current {
    background-color: #f0f0f0;
}

/* yellow marker strokes */
.mark {
    position: absolute;
    background-color: #f4ef12;
    mix-blend-mode: multiply;
}
.mark-tree {
    left: 6px;
    right: 6px;
    top: -4px;
    height: 23px;
}
.mark-head {
    top: -6px;
    right: -2px;
    width: 60px;
    height: 22px;
}
.mark-total {
    top: -6px;
    right: -6px;
    width: 60px;
    height: 22px;
}

/* tab controls */
.tabs {
    display: flex;
    flex-direction: column;
    min-width: 0;
    min-height: 0;
}
.workspace {
    flex: 1;
    margin-bottom: 2px;
}
.workspace > .tab-page {
    padding-bottom: 1px;
}
.tab-strip {
    display: flex;
    align-items: flex-end;
    flex: none;
    height: 21px;
    margin-bottom: -1px;
}
.tab-strip button {
    height: 18px;
    padding: 0 4px 0 4px;
    margin-bottom: 1px;
    border: 1px solid #dcdcdc;
    border-left: none;
    border-bottom: none;
}
.tab-strip button.active {
    position: relative;
    height: 21px;
    margin-bottom: 0;
    padding: 0 6px 3px;
    border-left: 1px solid #dcdcdc;
    background-color: #fff;
}
.tab-page {
    flex: 1;
    min-height: 0;
    display: flex;
    flex-direction: column;
    padding: 1px 3px 2px;
    border: 1px solid #dcdcdc;
    background-color: #fff;
}
.panes {
    flex: 1;
    min-height: 0;
    display: flex;
    background-color: #f0f0f0;
}
.left-pane {
    flex: none;
    width: 421px;
    display: flex;
    flex-direction: column;
}
.right-pane {
    flex: 1;
    min-width: 0;
    display: flex;
    flex-direction: column;
}
.editor, .viewer {
    flex: 1;
}

/* pattern editor */
.editor .tab-page {
    padding: 1px 2px 0 3px;
}
.bar {
    position: relative;
    flex: none;
    display: flex;
    align-items: center;
    justify-content: center;
    height: 22px;
    margin-bottom: 1px;
    border: solid #a0a0a0;
    border-width: 1px 0 0 1px;
    background-color: #c0c0c0;
    color: #4c4c4c;
}
.bar-open {
    height: 23px;
    margin: 0;
    border: none;
    background-color: #f0f0f0;
    color: #000;
}
.bar button {
    position: absolute;
    right: 5px;
}
.bar svg {
    width: 14px;
    height: 14px;
}
.code {
    flex: 1;
    min-height: 0;
    overflow: hidden;
    counter-reset: line;
    font-family: "DejaVu Sans Mono", monospace;
    line-height: 14px;
    background: linear-gradient(#c8c8c8 50%, transparent 50%) 15px 0 / 1px 2px repeat-y;
}
.code li {
    counter-increment: line;
    white-space: pre;
}
.code li::before {
    content: counter(line);
    display: inline-block;
    width: 13px;
    padding-right: 6px;
    text-align: right;
    color: #808080;
}
.code b, .code i, .code u {
    font-weight: normal;
    font-style: normal;
    text-decoration: none;
}
.code b {
    color: #008000;
}
.code i {
    color: #0000e0;
}
.code u {
    color: #b0b0b0;
}
.result-line {
    flex: none;
    height: 14px;
    line-height: 14px;
    overflow: hidden;
    white-space: nowrap;
}

/* batch browser */
.batch {
    flex: none;
    height: 356px;
    display: flex;
    flex-direction: column;
}
.batch-bar {
    padding-right: 0;
    margin-bottom: 2px;
}
.batch-bar .combo {
    flex: 1;
    height: 21px;
    margin: 0 4px 0 5px;
    padding-right: 2px;
    gap: 1px;
    border: 1px solid #c6c6c6;
    background-color: #e1e1e1;
}
svg.pick {
    width: 9px;
    height: 6px;
}
svg.pick-tree {
    width: 10px;
    height: 12px;
}
.batch-box {
    flex: 1;
    min-height: 0;
    display: flex;
    padding: 1px;
    margin-right: -1px;
    border: 1px solid #828790;
    background-color: #fff;
}
.batch-list {
    flex: 1;
    overflow: hidden;
}
.batch-root {
    display: flex;
    align-items: center;
    gap: 2px;
    height: 49px;
}
.batch-root svg {
    width: 48px;
    height: 40px;
}
.batch-list li {
    position: relative;
    display: flex;
    height: 50px;
    padding-left: 52px;
}
.batch-list li::before {
    content: "";
    position: absolute;
    left: 24px;
    top: 0;
    bottom: 0;
    border-left: 1px dotted #303030;
}
.batch-list li::after {
    content: "";
    position: absolute;
    left: 25px;
    width: 22px;
    top: 25px;
    border-top: 1px dotted #303030;
}
.batch-list .toggle {
    left: 20px;
    top: 21px;
    border-color: #707070;
    border-radius: 0;
}
.thumb {
    position: relative;
    width: 44px;
    padding-top: 2px;
}
.thumb svg {
    width: 44px;
    height: 46px;
}
.thumb svg.badge {
    position: absolute;
    left: 28px;
    top: 32px;
    width: 16px;
    height: 16px;
}
.name {
    padding: 15px 5px 0 1px;
    border: 1px solid transparent;
    line-height: 18px;
    white-space: nowrap;
}
.name small {
    display: block;
    font-size: 11px;
    color: #404040;
}
.name.selected {
    border: 1px dotted #202020;
    background-color: #d3d3d3;
}
.name.selected small {
    color: #ffffc0;
}

/* scroll bars */
.scroll-v, .scroll-h {
    flex: none;
    display: flex;
    align-items: center;
    background-color: #f0f0f0;
}
.scroll-v {
    flex-direction: column;
    width: 15px;
}
.scroll-v svg, .scroll-h svg {
    width: 9px;
    height: 9px;
    margin: 4px;
}
.track {
    flex: 1;
    align-self: stretch;
}
.thumb-v, .thumb-h {
    background-color: #cdcdcd;
}
.batch-thumb {
    height: 75%;
}
.doc-thumb {
    height: 57%;
    margin-top: 150px;
}
.thumb-h {
    width: 84%;
    height: 15px;
}

/* document viewer */
.viewer .tab-page {
    padding: 1px 3px 2px 2px;
}
.canvas {
    flex: 1;
    min-height: 0;
    display: flex;
}
.paper {
    flex: 1;
    min-width: 0;
    overflow: hidden;
    padding-left: 78px;
}
.letterhead {
    position: relative;
    width: 507px;
    height: 51px;
    font-weight: bold;
}
.address {
    position: absolute;
    left: 6px;
    bottom: 32px;
    line-height: 13px;
    font-size: 11px;
}
.terms {
    position: absolute;
    left: 258px;
    top: 0;
    line-height: 11px;
    font-size: 8px;
}
.terms span {
    margin-right: 6px;
    font-size: 9px;
    color: #f7941d;
}
.invoice {
    width: 507px;
    height: 424px;
    table-layout: fixed;
    border-collapse: collapse;
    font-size: 9px;
    color: #222;
    text-align: center;
}
.invoice th, .invoice td {
    height: 28px;
    padding: 0 5px 0 6px;
    border-bottom: 1px solid #d8d8d8;
}
.invoice th {
    padding: 0 0 0 6px;
    color: #f7941d;
    text-align: right;
}
.invoice thead th {
    position: relative;
    height: 20px;
    padding: 1px 0 0;
    border-bottom: 2px solid #fbc98c;
    text-align: center;
    vertical-align: top;
}
.invoice thead .c-desc {
    width: 167px;
    padding-left: 6px;
    text-align: left;
}
.c-mid {
    width: 64px;
}
.invoice thead .c-rate {
    width: 67px;
    text-align: right;
}
.invoice thead .c-sub {
    padding-right: 5px;
    text-align: right;
}
.invoice td:first-child {
    text-align: left;
}
.invoice td:nth-child(3), .invoice td:nth-child(5), .invoice td:last-child {
    font-size: 10px;
}
.invoice td:nth-child(5) {
    padding-right: 1px;
}
.invoice td:nth-child(5), .invoice td:last-child {
    text-align: right;
}
.match {
    position: absolute;
    top: 0;
    right: 4px;
    width: 498px;
    height: 12px;
    border: 1px solid #707070;
    background-color: #9fe8a0;
    mix-blend-mode: multiply;
}
.total {
    position: relative;
}
.status {
    height: 24px;
    background-color: #f0f0f0;
}
.status span {
    display: flex;
    align-items: center;
    gap: 3px;
    height: 18px;
    padding: 0 8px 0 6px;
    border-left: 1px solid #a8a8a8;
}
.status span:first-child {
    padding-left: 2px;
    border-left: none;
}

/* results grid */
.results {
    flex: none;
    height: 127px;
    display: flex;
    flex-direction: column;
    border: 1px solid #828790;
    background-color: #fff;
    padding-bottom: 1px;
}
.results-view {
    flex: 1;
    min-height: 0;
    overflow: hidden;
}
.results table {
    width: 100%;
    table-layout: fixed;
    border-collapse: collapse;
}
.results th, .results td {
    height: 17px;
    padding: 0 6px;
    border: 1px solid #ededed;
    border-width: 0 0 1px 1px;
    overflow: hidden;
    font-weight: normal;
    text-align: right;
    line-height: 13px;
    white-space: nowrap;
}
.results th {
    height: 25px;
    padding-top: 2px;
    border-bottom: none;
    border-left-color: #dcdcdc;
}
.results th:first-child, .results td:first-child, .results th:last-child {
    text-align: left;
}
.results th:first-child, .results td:first-child {
    border-left: none;
}
.hit {
    background-color: #f0f0f0;
}
.w80 {
    width: 80px;
}
.w60 {
    width: 60px;
}
.w-name {
    width: 25px;
}
.results th.w-name {
    padding-right: 0;
}
.scroll-h {
    height: 16px;
}

/* callouts */
.callout {
    position: absolute;
    filter: drop-shadow(3px 3px 2px rgba(0, 0, 0, 0.5));
    fill: #f7941d;
}
.callout span {
    position: absolute;
    width: 40px;
    height: 40px;
    line-height: 38px;
    text-align: center;
    font-family: "Open Sans", sans-serif;
    font-size: 24px;
    font-weight: 800;
    color: #fff;
}
.one {
    left: 282px;
    top: 150px;
}
.one svg {
    width: 150px;
    height: 48px;
}
.one span {
    left: 109px;
    top: 0;
}
.two {
    right: 104px;
    top: 48px;
}
.two svg {
    width: 48px;
    height: 152px;
}
.two span {
    left: 0;
    top: 0;
}
.three {
    right: 225px;
    top: 525px;
}
.three svg {
    width: 152px;
    height: 48px;
}
.three span {
    left: 0;
    top: 0;
}
```
